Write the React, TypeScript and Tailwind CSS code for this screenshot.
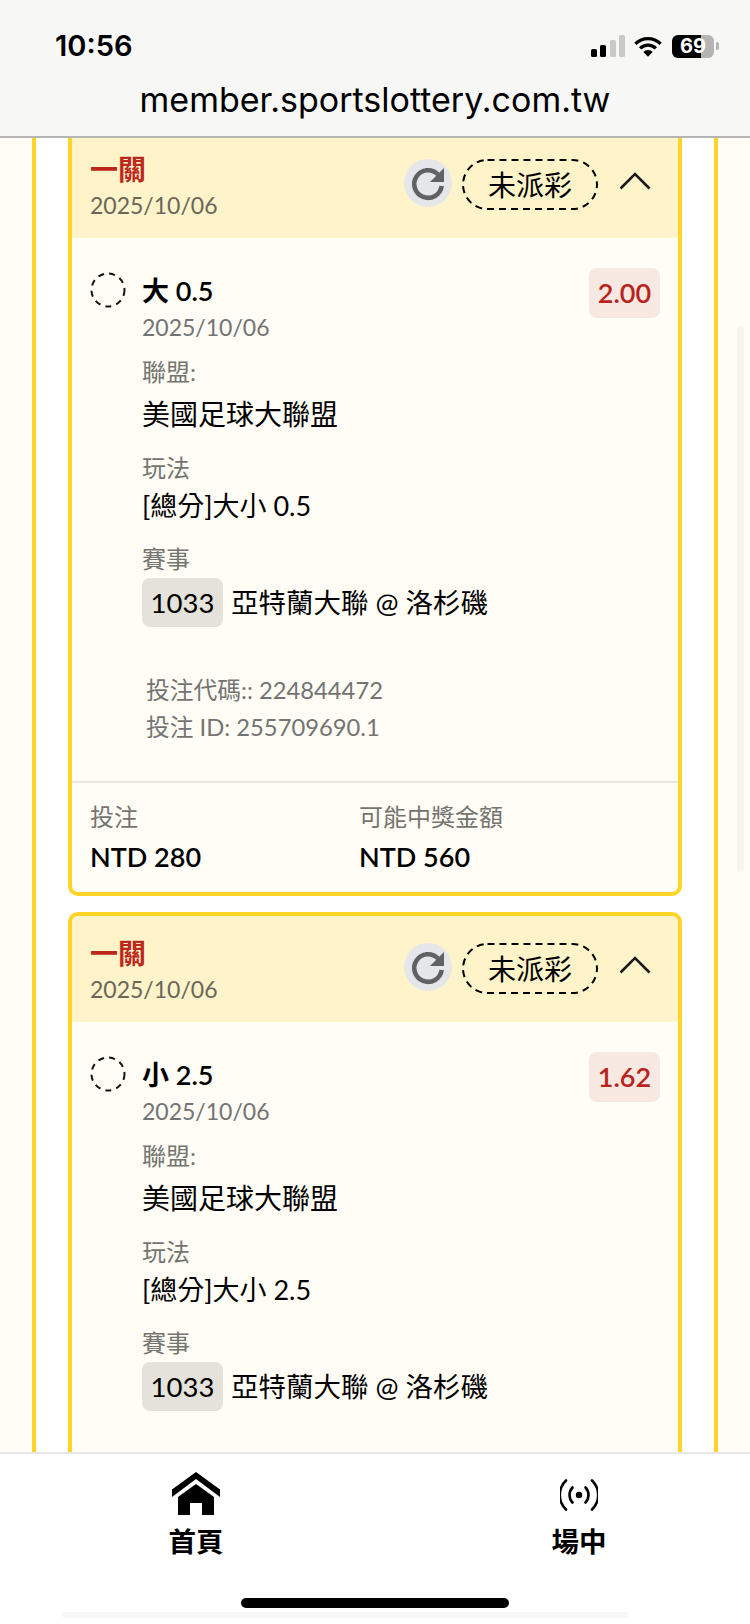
import React from 'react';

const CJK = "font-['Lato','Noto_Sans_CJK_TC',sans-serif]";

type Bet = {
  pick: string;
  odds: string;
  line: string;
  code?: string;
  betId?: string;
  stake?: string;
  payout?: string;
};

// second card runs off under the nav, only what shows is filled in
const bets: Bet[] = [
  { pick: '大 0.5', odds: '2.00', line: '[總分]大小 0.5', code: '224844472', betId: '255709690.1', stake: 'NTD 280', payout: 'NTD 560' },
  { pick: '小 2.5', odds: '1.62', line: '[總分]大小 2.5' },
];

const RefreshIcon = () => (
  <svg width="48" height="48" viewBox="0 0 48 48" className="shrink-0">
    <circle cx="24" cy="24" r="24" fill="#e4e6ea" />
    <path d="M34 15.5A13.8 13.8 0 1 0 37.7 27" fill="none" stroke="#5f6163" strokeWidth="4.6" />
    <path d="M40 9v14H26z" fill="#5f6163" />
  </svg>
);

const Chevron = () => (
  <svg width="32" height="18" viewBox="0 0 32 18" className="shrink-0">
    <path d="M1.5 16.5 16 2l14.5 14.5" fill="none" stroke="#1a1a1a" strokeWidth="2.6" />
  </svg>
);

const StatusIcons = () => (
  <div className="flex items-center">
    <div className="flex items-end gap-[3.5px] h-[22px]">
      <div className="w-[6px] h-[8px] rounded-[1.5px] bg-black" />
      <div className="w-[6px] h-[12px] rounded-[1.5px] bg-black" />
      <div className="w-[6px] h-[17px] rounded-[1.5px] bg-[#c9c9c7]" />
      <div className="w-[6px] h-[22px] rounded-[1.5px] bg-[#c9c9c7]" />
    </div>
    <svg width="28" height="21" viewBox="0 0 30 22" className="ml-[9px]">
      <path d="M1.5 8.2a19 19 0 0 1 27 0" fill="none" stroke="#000" strokeWidth="3.6" />
      <path d="M6.6 13a12 12 0 0 1 16.8 0" fill="none" stroke="#000" strokeWidth="3.6" />
      <path d="M15 22l-5-5.2a7 7 0 0 1 10 0z" fill="#000" />
    </svg>
    <div className="relative ml-[10px] flex w-[42px] h-[23px] rounded-[6px] overflow-hidden">
      <div className="w-[29px] bg-black" />
      <div className="flex-1 bg-[#b4b4b2]" />
      <span className="absolute inset-0 flex items-center justify-center text-white text-[20px] font-bold leading-none font-['Inter',sans-serif]">
        69
      </span>
    </div>
    <div className="ml-[2px] w-[3px] h-[8px] rounded-r-[2px] bg-[#b4b4b2]" />
  </div>
);

const Label = ({ children, className = '' }: { children: React.ReactNode; className?: string }) => (
  <div className={`text-[24px] leading-[34px] text-[#747470] ${className}`}>{children}</div>
);

const StatusPill = () => (
  <div className="relative ml-[10px] w-[136px] h-[51px] flex items-center justify-center text-[28px] text-black">
    <svg width="136" height="51" viewBox="0 0 136 51" className="absolute inset-0">
      <rect x="1" y="1" width="134" height="49" rx="24.5" fill="none" stroke="#000" strokeWidth="2" strokeDasharray="7 5" />
    </svg>
    未派彩
  </div>
);

const BetCard = ({ bet }: { bet: Bet }) => (
  <div className="min-h-[760px] border-4 border-[#ffd426] rounded-[10px] bg-[#fffdf5] overflow-hidden">
    <div className="h-[106px] bg-[#fef3c9] pl-[18px] pr-[27px] flex justify-between">
      <div>
        <div className="mt-[19px] text-[28px] leading-[36px] font-bold text-[#bd271c]">一關</div>
        <div className="mt-[1px] text-[23px] leading-[34px] text-[#6b665a]">2025/10/06</div>
      </div>
      <div className="flex items-start pt-[27px]">
        <RefreshIcon />
        <StatusPill />
        <div className="ml-[21px] mt-[13px]">
          <Chevron />
        </div>
      </div>
    </div>

    <div className="px-[18px] pt-[30px] pb-[35px]">
      <div className="flex justify-between items-start">
        <div className="flex items-start">
          <svg width="36" height="36" viewBox="0 0 36 36" className="mt-[4px] shrink-0">
            <circle cx="18" cy="18" r="16.5" fill="none" stroke="#111" strokeWidth="2" strokeDasharray="6 5.2" />
          </svg>
          <div className="ml-[16px]">
            <div className="mt-[5px] text-[27px] leading-[36px] font-semibold text-black">{bet.pick}</div>
            <div className="mt-[1px] text-[23px] leading-[34px] text-[#737373]">2025/10/06</div>
          </div>
        </div>
        <div className="w-[71px] h-[50px] rounded-[8px] bg-[#f7e8e2] flex items-center justify-center text-[27px] font-semibold text-[#b9231b]">
          {bet.odds}
        </div>
      </div>

      <div className="pl-[52px]">
        <Label className="mt-[11px]">聯盟:</Label>
        <div className="mt-[7px] text-[28px] leading-[36px] text-black">美國足球大聯盟</div>
        <Label className="mt-[19px]">玩法</Label>
        <div className="mt-[3px] text-[27px] leading-[36px] text-black">{bet.line}</div>
        <Label className="mt-[18px]">賽事</Label>
        <div className="mt-[2px] flex items-center">
          <span className="w-[81px] h-[49px] rounded-[8px] bg-[#e4e2da] flex items-center justify-center text-[27.5px] text-black">
            1033
          </span>
          <span className="ml-[8px] text-[27.5px] text-black">亞特蘭大聯 @ 洛杉磯</span>
        </div>
      </div>

      {bet.code && (
        <div className="mt-[45px] pl-[56px] text-[23.75px] leading-[37px] text-[#737373]">
          <div>投注代碼:: {bet.code}</div>
          <div>投注 ID: {bet.betId}</div>
        </div>
      )}
    </div>

    {bet.stake && (
      <div className="border-t-2 border-[#e8e5dc] px-[18px] pt-[16px] pb-[17px] flex">
        <div className="w-[269px]">
          <div className="text-[24px] leading-[36px] text-[#747470]">投注</div>
          <div className="mt-[4px] text-[27px] leading-[36px] font-semibold text-black">{bet.stake}</div>
        </div>
        <div>
          <div className="text-[24px] leading-[36px] text-[#747470]">可能中獎金額</div>
          <div className="mt-[4px] text-[27px] leading-[36px] font-semibold text-black">{bet.payout}</div>
        </div>
      </div>
    )}
  </div>
);

export default function App() {
  return (
    <div className={`relative w-[750px] h-[1624px] overflow-hidden flex flex-col bg-white ${CJK}`}>
      {/* safari chrome */}
      <header className="h-[138px] shrink-0 bg-[#f7f7f5] border-b-2 border-[#b5b5b3] px-[55px] font-['Inter',sans-serif]">
        <div className="flex justify-between items-center pt-[30px] -mr-[24px]">
          <span className="text-[29px] leading-[32px] font-semibold text-black">10:56</span>
          <StatusIcons />
        </div>
        <div className="mt-[16px] -mx-[55px] text-center text-[34px] leading-[44px] text-black">member.sportslottery.com.tw</div>
      </header>

      <main className="flex-1 min-h-0 overflow-hidden bg-[#fffdf5] px-[32px]">
        <div className="-mt-[10px] border-x-4 border-[#ffd426] bg-white px-[32px] flex flex-col gap-[16px] pb-[40px]">
          {bets.map((b) => (
            <BetCard key={b.pick} bet={b} />
          ))}
        </div>
      </main>

      {/* scrollbar overlay */}
      <div className="absolute left-[737px] top-[326px] w-[7px] h-[546px] rounded-full bg-[#f7f5ee]" />

      <nav className="h-[172px] shrink-0 bg-white border-t-2 border-[#e5e7eb]">
        <div className="flex justify-between pl-[168px] pr-[143px] pt-[18px]">
          <div className="w-[56px] flex flex-col items-center">
            <svg width="48" height="43" viewBox="0 0 48 43" className="shrink-0">
              <path d="M24 0 48 17.5V25L24 7 0 25v-7.5z" fill="#000" />
              <path d="M24 12 42 25v18H30V31H18v12H6V25z" fill="#000" />
            </svg>
            <span className="mt-[13px] text-[27.5px] leading-[28px] font-bold text-black whitespace-nowrap">首頁</span>
          </div>
          <div className="w-[56px] flex flex-col items-center">
            <svg width="38" height="32" viewBox="0 0 38 32" className="mt-[7px] shrink-0">
              <circle cx="19" cy="16" r="3.2" fill="#000" />
              <g fill="none" stroke="#000" strokeWidth="2.6" strokeLinecap="round">
                <path d="M12.5 8.5a11 11 0 0 0 0 15" />
                <path d="M25.5 8.5a11 11 0 0 1 0 15" />
                <path d="M6 1.5a20 20 0 0 0 0 29" />
                <path d="M32 1.5a20 20 0 0 1 0 29" />
              </g>
            </svg>
            <span className="mt-[17px] text-[27.5px] leading-[28px] font-bold text-black whitespace-nowrap">場中</span>
          </div>
        </div>
      </nav>

      {/* home indicator */}
      <div className="absolute left-[241px] top-[1598px] w-[268px] h-[10px] rounded-full bg-black" />
      <div className="absolute left-[62px] top-[1612px] w-[566px] h-[6px] rounded-[3px] bg-[#f7f7f7]" />
    </div>
  );
}
